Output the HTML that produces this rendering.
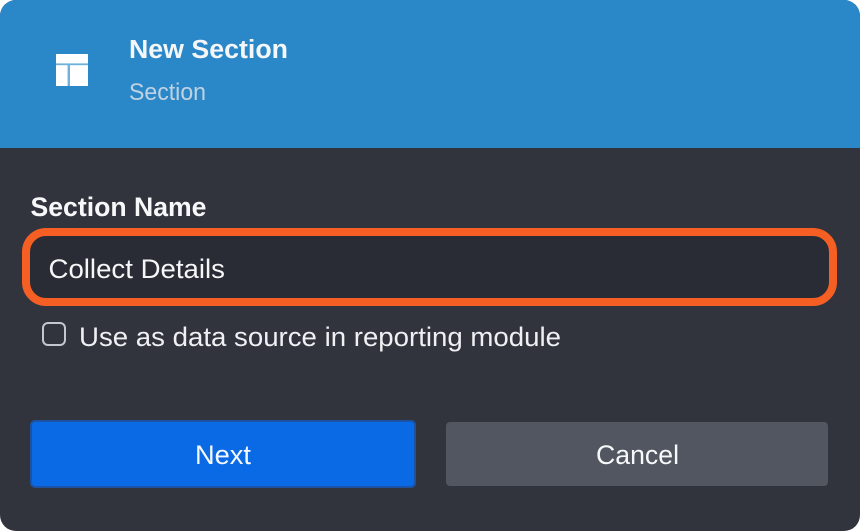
<!DOCTYPE html>
<html>
<head>
<meta charset="utf-8">
<style>
html,body{margin:0;padding:0;background:#fff;}
body{width:860px;height:531px;overflow:hidden;}
svg{display:block;}
text{font-family:"Liberation Sans",sans-serif;}
</style>
</head>
<body>
<svg width="860" height="531" viewBox="0 0 860 531" xmlns="http://www.w3.org/2000/svg">
  <rect x="0" y="0" width="860" height="531" fill="#ffffff"/>
  <rect x="0" y="0" width="860" height="531" rx="16" ry="16" fill="#31343d"/>
  <path d="M0 148V16A16 16 0 0 1 16 0H844A16 16 0 0 1 860 16V148Z" fill="#2b88c8"/>

  <rect x="56" y="54" width="32" height="32" fill="#6fb0dc"/>
  <rect x="56" y="54" width="32" height="9.4" fill="#ffffff"/>
  <rect x="56" y="65.2" width="11.6" height="20.8" fill="#ffffff"/>
  <rect x="70" y="65.2" width="18" height="20.8" fill="#ffffff"/>

  <text x="129" y="58" font-size="25.5" font-weight="700" fill="#f5f6f8" textLength="159" lengthAdjust="spacingAndGlyphs">New Section</text>
  <text x="129" y="100" font-size="24" fill="#c0d2e2" textLength="77" lengthAdjust="spacingAndGlyphs">Section</text>

  <text x="30.5" y="216" font-size="26.5" font-weight="700" fill="#f7f8fa" textLength="176" lengthAdjust="spacingAndGlyphs">Section Name</text>

  <rect x="26" y="232" width="807" height="70" rx="20" ry="20" fill="#2a2c35" stroke="#f55f24" stroke-width="8"/>
  <text x="48.5" y="278" font-size="26.5" fill="#f5f6f8" textLength="176.5" lengthAdjust="spacingAndGlyphs">Collect Details</text>

  <rect x="43" y="323" width="22" height="22" rx="5" ry="5" fill="none" stroke="#c4c7ce" stroke-width="2"/>
  <text x="79" y="346" font-size="26.5" fill="#eef0f3" textLength="482" lengthAdjust="spacingAndGlyphs">Use as data source in reporting module</text>

  <rect x="31" y="421" width="384" height="66" rx="4" ry="4" fill="#0a6ae6" stroke="#1c53a4" stroke-width="2"/>
  <text x="195" y="464" font-size="26.5" fill="#f5f8fe" textLength="56" lengthAdjust="spacingAndGlyphs">Next</text>

  <rect x="446" y="422" width="382" height="64" rx="4" ry="4" fill="#515661"/>
  <text x="596" y="464" font-size="26.5" fill="#f7f8fa" textLength="83" lengthAdjust="spacingAndGlyphs">Cancel</text>
</svg>
</body>
</html>
